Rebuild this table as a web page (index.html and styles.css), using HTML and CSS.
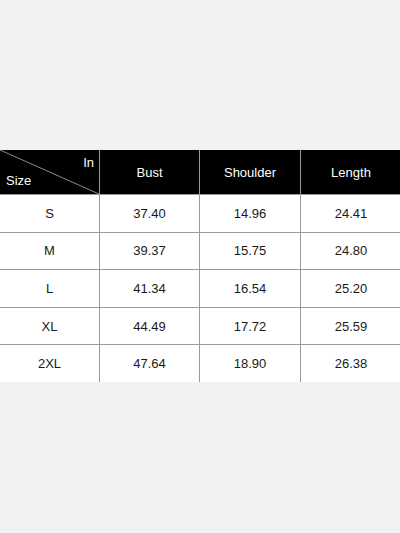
FILE: index.html
```html
<!DOCTYPE html>
<html>
<head>
<meta charset="utf-8">
<link rel="stylesheet" href="styles.css">
</head>
<body>
<div class="page">
  <div class="chart">
    <div class="cell head corner">
      <svg class="diag" viewBox="0 0 99 44" preserveAspectRatio="none"><line x1="0" y1="0" x2="99" y2="44" stroke="#8a8a8a" stroke-width="1"/></svg>
      <span class="in">In</span>
      <span class="size">Size</span>
    </div>
    <div class="cell head">Bust</div>
    <div class="cell head">Shoulder</div>
    <div class="cell head">Length</div>

    <div class="cell">S</div><div class="cell">37.40</div><div class="cell">14.96</div><div class="cell">24.41</div>
    <div class="cell">M</div><div class="cell">39.37</div><div class="cell">15.75</div><div class="cell">24.80</div>
    <div class="cell">L</div><div class="cell">41.34</div><div class="cell">16.54</div><div class="cell">25.20</div>
    <div class="cell">XL</div><div class="cell">44.49</div><div class="cell">17.72</div><div class="cell">25.59</div>
    <div class="cell">2XL</div><div class="cell">47.64</div><div class="cell">18.90</div><div class="cell">26.38</div>
  </div>
</div>
</body>
</html>
```
FILE: styles.css
```css
html, body {
  margin: 0;
  padding: 0;
}
body {
  background: #f2f2f2;
  font-family: "Liberation Sans", Arial, sans-serif;
  width: 400px;
  height: 533px;
  overflow: hidden;
}
.page {
  padding-top: 150px;
}
.chart {
  display: grid;
  grid-template-columns: 99px 99px 100px 100px;
  grid-template-rows: 44px repeat(5, 36.6px);
  column-gap: 1px;
  row-gap: 1px;
  background: #9a9a9a;
  width: 401px;
}
.cell {
  background: #fff;
  color: #1a1a1a;
  font-size: 13px;
  display: flex;
  align-items: center;
  justify-content: center;
}
.head {
  background: #000;
  color: #fff;
}
.corner {
  position: relative;
  display: block;
}
.diag {
  position: absolute;
  left: 0;
  top: 0;
  width: 100%;
  height: 100%;
}
.in {
  position: absolute;
  right: 5px;
  top: 5px;
}
.size {
  position: absolute;
  left: 6px;
  bottom: 6px;
}
```
